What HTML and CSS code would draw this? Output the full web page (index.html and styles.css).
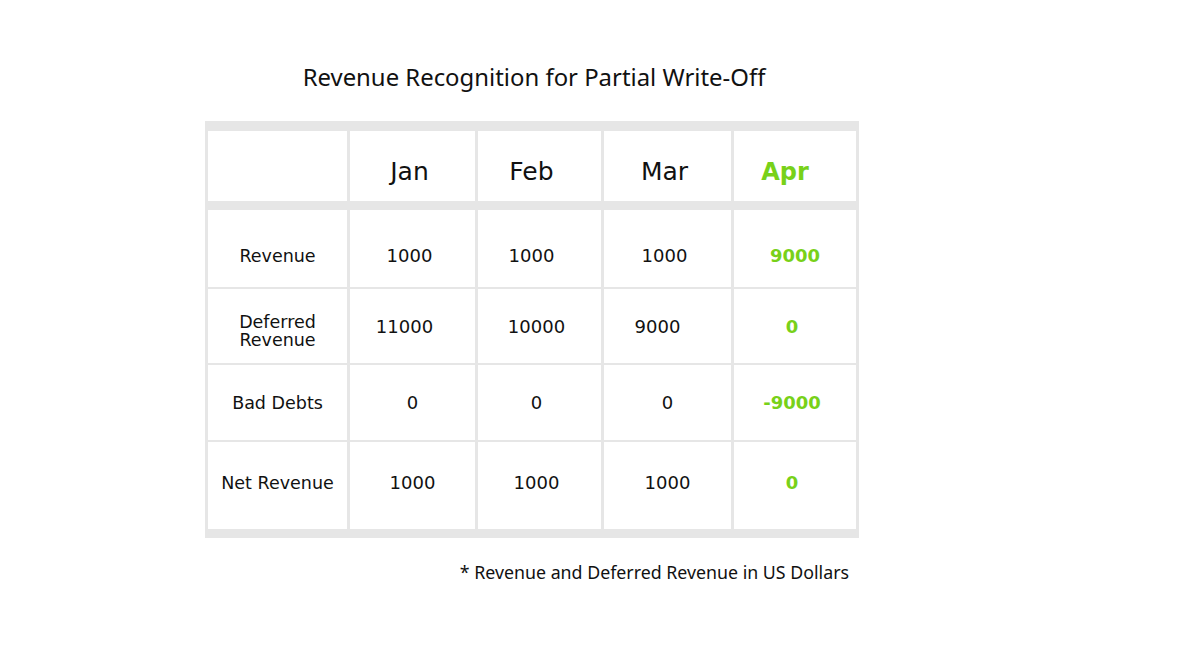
FILE: index.html
```html
<!DOCTYPE html>
<html>
<head>
<meta charset="utf-8">
<link rel="stylesheet" href="styles.css">
</head>
<body>
<div class="page">
  <h1 class="title">Revenue Recognition for Partial Write-Off</h1>
  <div class="grid">
    <div class="cell head"></div>
    <div class="cell head sl3">Jan</div>
    <div class="cell head sl8">Feb</div>
    <div class="cell head sl3">Mar</div>
    <div class="cell head green sl10">Apr</div>

    <div class="cell r1 label">Revenue</div>
    <div class="cell r1 sl3">1000</div>
    <div class="cell r1 sl8">1000</div>
    <div class="cell r1 sl3">1000</div>
    <div class="cell r1 green">9000</div>

    <div class="cell r2 label lab2">Deferred<br>Revenue</div>
    <div class="cell r2 sl8">11000</div>
    <div class="cell r2 sl3">10000</div>
    <div class="cell r2 sl10">9000</div>
    <div class="cell r2 green sl3">0</div>

    <div class="cell r3 label">Bad Debts</div>
    <div class="cell r3">0</div>
    <div class="cell r3 sl3">0</div>
    <div class="cell r3">0</div>
    <div class="cell r3 green sl3">-9000</div>

    <div class="cell r4 label">Net Revenue</div>
    <div class="cell r4">1000</div>
    <div class="cell r4 sl3">1000</div>
    <div class="cell r4">1000</div>
    <div class="cell r4 green sl3">0</div>
  </div>
  <p class="note">* Revenue and Deferred Revenue in US Dollars</p>
</div>
</body>
</html>
```

FILE: styles.css
```css
html, body {
  margin: 0;
  padding: 0;
  background: #ffffff;
}

.page {
  padding: 60px 0 0 205px;
  width: 654px;
}

.title {
  margin: 0 0 27px 4px;
  text-align: center;
  font-family: "Noto Sans", "Open Sans", sans-serif;
  font-weight: 400;
  font-size: 23.9px;
  line-height: 34px;
  color: #111111;
}

.grid {
  display: grid;
  grid-template-columns: 139px 125px 123px 127px 122px;
  grid-template-rows: 77px 77px 74px 75px 87px;
  column-gap: 3px;
  row-gap: 2px;
  padding: 10px 3px 9px 3px;
  background: #e6e6e6;
  width: 648px;
}

.cell {
  background: #ffffff;
  display: flex;
  align-items: center;
  justify-content: center;
  text-align: center;
  box-sizing: border-box;
  font-family: "DejaVu Sans", "Verdana", sans-serif;
  font-size: 18px;
  line-height: 18px;
  color: #111111;
}

.head {
  margin-bottom: 7px;
  font-size: 25px;
  padding-top: 12px;
}

.r1 {
  padding-top: 14px;
}

.r2 {
  padding-top: 2px;
}

.lab2 {
  padding-top: 10px;
}

.r4 {
  padding-bottom: 6px;
}

.label {
  font-size: 17.5px;
}

.sl3 {
  padding-right: 6px;
}

.sl8 {
  padding-right: 16px;
}

.sl10 {
  padding-right: 20px;
}

.green {
  color: #78d119;
  font-weight: 700;
}

.head.green {
  font-size: 24px;
}

.note {
  margin: 22px 10px 0 0;
  text-align: right;
  font-family: "Noto Sans", "Open Sans", sans-serif;
  font-size: 17.8px;
  color: #111111;
}
```
